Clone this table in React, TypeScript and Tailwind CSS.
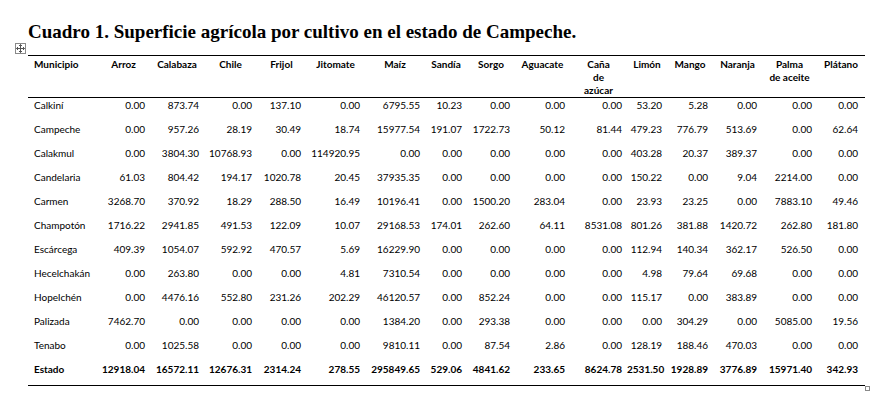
import React from "react";

const cols: { label: React.ReactNode; w: string }[] = [
  { label: "Municipio", w: "w-[69px]" },
  { label: "Arroz", w: "w-[53px]" },
  { label: "Calabaza", w: "w-[54px]" },
  { label: "Chile", w: "w-[53px]" },
  { label: "Frijol", w: "w-[49px]" },
  { label: "Jitomate", w: "w-[59px]" },
  { label: "Maíz", w: "w-[60px]" },
  { label: "Sandía", w: "w-[42px]" },
  { label: "Sorgo", w: "w-[48px]" },
  { label: "Aguacate", w: "w-[55px]" },
  { label: (<>Caña<br />de<br />azúcar</>), w: "w-[57px]" },
  { label: "Limón", w: "w-[40px]" },
  { label: "Mango", w: "w-[46px]" },
  { label: "Naranja", w: "w-[49px]" },
  { label: (<>Palma<br />de aceite</>), w: "w-[55px]" },
  { label: "Plátano", w: "w-[48px]" },
];

const rows: string[][] = [
  ["Calkiní", "0.00", "873.74", "0.00", "137.10", "0.00", "6795.55", "10.23", "0.00", "0.00", "0.00", "53.20", "5.28", "0.00", "0.00", "0.00"],
  ["Campeche", "0.00", "957.26", "28.19", "30.49", "18.74", "15977.54", "191.07", "1722.73", "50.12", "81.44", "479.23", "776.79", "513.69", "0.00", "62.64"],
  ["Calakmul", "0.00", "3804.30", "10768.93", "0.00", "114920.95", "0.00", "0.00", "0.00", "0.00", "0.00", "403.28", "20.37", "389.37", "0.00", "0.00"],
  ["Candelaria", "61.03", "804.42", "194.17", "1020.78", "20.45", "37935.35", "0.00", "0.00", "0.00", "0.00", "150.22", "0.00", "9.04", "2214.00", "0.00"],
  ["Carmen", "3268.70", "370.92", "18.29", "288.50", "16.49", "10196.41", "0.00", "1500.20", "283.04", "0.00", "23.93", "23.25", "0.00", "7883.10", "49.46"],
  ["Champotón", "1716.22", "2941.85", "491.53", "122.09", "10.07", "29168.53", "174.01", "262.60", "64.11", "8531.08", "801.26", "381.88", "1420.72", "262.80", "181.80"],
  ["Escárcega", "409.39", "1054.07", "592.92", "470.57", "5.69", "16229.90", "0.00", "0.00", "0.00", "0.00", "112.94", "140.34", "362.17", "526.50", "0.00"],
  ["Hecelchakán", "0.00", "263.80", "0.00", "0.00", "4.81", "7310.54", "0.00", "0.00", "0.00", "0.00", "4.98", "79.64", "69.68", "0.00", "0.00"],
  ["Hopelchén", "0.00", "4476.16", "552.80", "231.26", "202.29", "46120.57", "0.00", "852.24", "0.00", "0.00", "115.17", "0.00", "383.89", "0.00", "0.00"],
  ["Palizada", "7462.70", "0.00", "0.00", "0.00", "0.00", "1384.20", "0.00", "293.38", "0.00", "0.00", "0.00", "304.29", "0.00", "5085.00", "19.56"],
  ["Tenabo", "0.00", "1025.58", "0.00", "0.00", "0.00", "9810.11", "0.00", "87.54", "2.86", "0.00", "128.19", "188.46", "470.03", "0.00", "0.00"],
  ["Estado", "12918.04", "16572.11", "12676.31", "2314.24", "278.55", "295849.65", "529.06", "4841.62", "233.65", "8624.78", "2531.50", "1928.89", "3776.89", "15971.40", "342.93"],
];

function MoveHandle() {
  return (
    <div className="absolute left-[15px] top-[43px] flex h-[11px] w-[11px] items-center justify-center border border-[#8a8a8a] bg-white">
      <svg width="9" height="9" viewBox="0 0 9 9" fill="none" stroke="#555" strokeWidth="1">
        <path d="M4.5 0.5 V8.5 M0.5 4.5 H8.5" />
        <path d="M3 2 L4.5 0.5 L6 2 M3 7 L4.5 8.5 L6 7 M2 3 L0.5 4.5 L2 6 M7 3 L8.5 4.5 L7 6" />
      </svg>
    </div>
  );
}

export default function App() {
  return (
    <div className="relative h-[400px] w-[879px] overflow-hidden bg-white text-black">
      <MoveHandle />
      <div className="pl-[28px] pt-[20px]">
        <h1 className="text-[19px] font-bold leading-[23px] font-['Liberation_Serif','Times_New_Roman',serif]">
          Cuadro 1. Superficie agrícola por cultivo en el estado de Campeche.
        </h1>
        <table className="mt-[12px] w-[837px] table-fixed border-collapse font-['Lato','Open_Sans',sans-serif] text-[10px] leading-[13px]">
          <thead>
            <tr className="border-y border-black">
              {cols.map((c, i) => (
                <th
                  key={i}
                  className={`${c.w} ${i === 0 ? "pl-[6px] text-left" : "px-[2px] text-center"} h-[41px] whitespace-nowrap pt-[2px] align-top font-bold`}
                >
                  {c.label}
                </th>
              ))}
            </tr>
          </thead>
          <tbody>
            {rows.map((r, ri) => (
              <tr
                key={ri}
                className={ri === rows.length - 1 ? "border-b border-black font-bold" : ""}
              >
                {r.map((v, ci) => (
                  <td
                    key={ci}
                    className={`${ci === 0 ? "pl-[6px] text-left" : ci === 15 ? "pr-[7px] text-right" : "pr-[5px] text-right"} h-[24px] whitespace-nowrap pt-[1px] align-top`}
                  >
                    {v}
                  </td>
                ))}
              </tr>
            ))}
          </tbody>
        </table>
      </div>
      <div className="absolute left-[865px] top-[386px] h-[5px] w-[5px] border border-[#8a8a8a] bg-white" />
    </div>
  );
}
